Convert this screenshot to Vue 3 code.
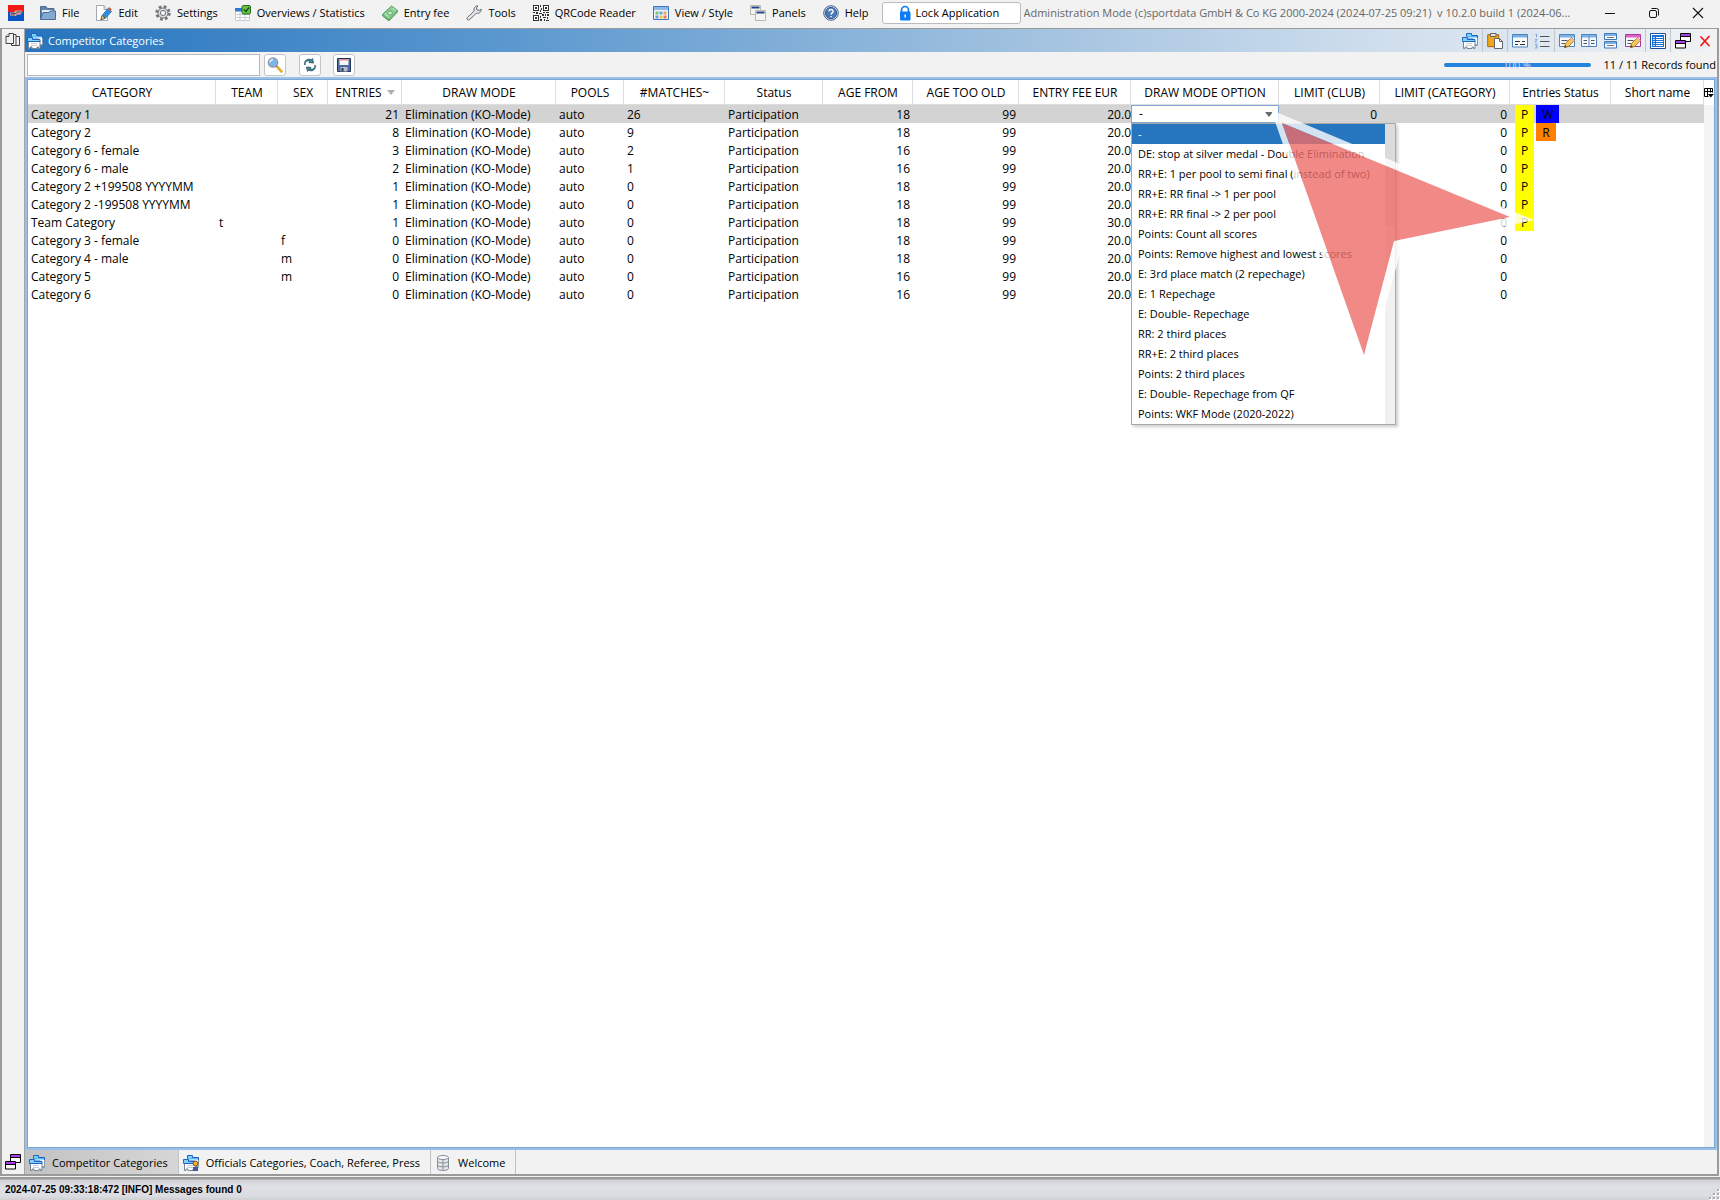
<script setup>
import { ref } from 'vue'

const folderStack = '<path d="M4.500 3.500v-3h5v2h6v9.500h-4v-6h-7z" fill="#fff" stroke="#1b62c4"/><path d="M5 1h4v2H5z" fill="#7fd0fa"/><path d="M5 3h10v1.500H5z" fill="#4fb8f5"/><path d="M15.500 5v7h-2.500" fill="none" stroke="#8b96a2"/><path d="M1.500 8v7.500h1.500v-1.500h2v1.500h5v-1.500h1.500v1.500h1.500V8z" fill="#fff" stroke="#7b8794"/><path d="M.500 7.500v-3h5v2h7.500v2H.500z" fill="#7fd0fa" stroke="#1b62c4"/><path d="M4 10.500h6M4 12.500h6" stroke="#c9ced4"/>'
const windows = '<path d="M5.500.500h10v8h-10z" fill="#fff" stroke="#000"/><path d="M6 1h9v2H6z" fill="#a93df0"/><path d="M5.500 3.500h10" stroke="#000"/><path d="M.500 7.500h10v7.500H.500z" fill="#fff" stroke="#000"/><path d="M1 8h9v2H1z" fill="#a93df0"/><path d="M.500 10.500h10" stroke="#000"/>'
const pencil = '<path d="M5.500 14.500l1-4 6-6 3 3-6 6z" fill="#f5c65a" stroke="#b07a2a"/><path d="M11 6l3 3 1.500-1.500-3-3z" fill="#f3b9a0"/><path d="M5.200 14.800l.8-2.800 2 2z" fill="#444"/>'

const icons = {
  logo: '<path fill="#f01818" d="M0 0h16v7H0z"/><path fill="#0a52c8" d="M0 7h16v9H0z"/><path d="M2 7.500h4l1-2h7l-1 4H9l-1 1.500H2.500z" fill="#d8a8a0"/><path d="M3 8.500h5l1-1.500h4M3 10h4" stroke="#555" fill="none"/>',
  file: '<path d="M.500 14.500v-13h5.500l1.500 2h6.500v4" fill="#5f83ad" stroke="#4c6f98"/><path d="M2 5h11v4H2z" fill="#e9eef5"/><path d="M.500 14.500L3 7.500h6l1-1.500h5.500v8.500z" fill="#84a9d3" stroke="#4c6f98"/>',
  edit: '<path d="M.500.500h7.500l3.500 4v11H.500z" fill="#fff" stroke="#a3a9b0"/><path d="M8 .5v4h3.500" fill="#dde" stroke="#a3a9b0"/><path d="M5 14.500l1.500-4.500 5.500-6.500 3.500 3-6 6.500z" fill="#2c8fe0" stroke="#1c5da5" stroke-width=".8"/><path d="M12 3.500l1.300-1.500 2.500 2.400L14.500 6z" fill="#e35a36"/><path d="M4.800 14.800l1.300-4.300 3.200 2.600z" fill="#f2c36b" stroke="#5a4420" stroke-width=".7"/>',
  settings: '<circle cx="8" cy="8" r="6.300" fill="none" stroke="#73777c" stroke-width="2.800" stroke-dasharray="2.700 2.240"/><circle cx="8" cy="8" r="5" fill="#d9dbde" stroke="#73777c"/><circle cx="8" cy="8" r="2.600" fill="#f2f2f2" stroke="#73777c"/>',
  overview: '<path d="M.500 3.500h14v12H.500z" fill="#fff" stroke="#c4ccd6"/><path d="M0 3h8v3.500H0z" fill="#2e7ad0"/><path d="M0 9.500h15M0 12.500h15M5 7v9M10 7v9" stroke="#c4ccd6"/><rect x="7" y=".5" width="8.500" height="8.500" rx="1.500" fill="#6fc043" stroke="#1f6d1f"/><path d="M9 4.500l2 2 3-4" fill="none" stroke="#124d12" stroke-width="1.400"/>',
  fee: '<path d="M.500 9.500L9.500 1l6 4.500-8.500 9.500z" fill="#8bcf92" stroke="#4f9a5b"/><path d="M.500 9.500v1.500l6.500 5v-1.500M7 16l8.500-9V5.500" fill="#6fb57a" stroke="#4f9a5b" stroke-width=".8"/><ellipse cx="8" cy="8" rx="2.300" ry="2" fill="#cdeecf" stroke="#4f9a5b" stroke-width=".8"/><path d="M10.500 3l3 2.300M3 8.500l3 2.800" stroke="#d6f2d8"/>',
  tools: '<path d="M1.200 12.700l7-6.700c-.8-2.700.7-5 3.600-5.200L10.500 3l.6 2 2 .5 2-1.500c.4 3-2 5-4.800 4.300l-7 6.500c-1.600.8-3-.6-2.100-2.100z" fill="#e3e5e9" stroke="#666b74"/>',
  qr: '<path d="M0 0h6v6H0zM10 0h6v6h-6zM0 10h6v6H0z" fill="#333"/><path d="M1 1h4v4H1zM11 1h4v4h-4zM1 11h4v4H1z" fill="#fff"/><path d="M2 2h2v2H2zM12 2h2v2h-2zM2 12h2v2H2zM7 0h1v2H7zM8 3h1v2H8zM7 5h1v2H7zM0 7h2v1H0zM3 7h2v2H3zM6 8h3v1H6zM10 7h2v1h-2zM13 7h3v1h-3zM9 9h2v2H9zM12 9h1v2h-1zM14 9h2v2h-2zM7 11h1v2H7zM10 12h3v1h-3zM14 12h1v2h-1zM7 14h2v2H7zM11 14h1v2h-1zM13 15h3v1h-3z" fill="#333"/>',
  view: '<path d="M.500 1.500h15v13H.500z" fill="#eef4fc" stroke="#3e76bd"/><path d="M1 2h14v3H1z" fill="#8fb7ea"/><path d="M2.500 6.500h3v3h-3z" fill="#7dc36b"/><path d="M6.500 6.500h3v3h-3z" fill="#6aa3e0"/><path d="M10.500 6.500h3v3h-3z" fill="#f0a64a"/><path d="M2.500 10.500h3v3h-3z" fill="#6aa3e0"/><path d="M6.500 10.500h3v3h-3z" fill="#f3c34e"/><path d="M10.500 10.500h3v3h-3z" fill="#ea7f45"/>',
  panels: '<path d="M.500.500h10v9H.500z" fill="#f4f4f0" stroke="#b9b9ae"/><path d="M1.500 1.500h8v2h-8z" fill="#27458f"/><path d="M5.500 5.500h10v10h-10z" fill="#f4f4f0" stroke="#b9b9ae"/><path d="M6.500 6.500h8v2h-8z" fill="#27458f"/>',
  help: '<circle cx="8" cy="8" r="7.300" fill="#dbe3ee" stroke="#405f90"/><circle cx="8" cy="8" r="5.600" fill="#4a79b8" stroke="#345a93"/><path d="M5.900 6.400c.2-2.600 4.300-2.400 4.200 0 0 1.500-2 1.600-2 3.200M8 11v1.200" fill="none" stroke="#fff" stroke-width="1.500"/>',
  lock: '<path d="M4.500 7V5a3.500 3.500 0 0 1 7 0v2" fill="none" stroke="#0f7af5" stroke-width="1.700"/><rect x="3" y="6.500" width="10.500" height="9" rx="1.200" fill="#0f7af5"/><path d="M8.200 9.500v3" stroke="#fff" stroke-width="1.400"/>',
  pages: '<g fill="#f2f2f2" stroke="#444"><path d="M9.500 4.500h5v9h-5z"/><path d="M6.500 2.500h4.500v11H6.500z"/><path d="M4 1.500h4.500v10H1V4.500z"/><path d="M4 1.500v3H1"/></g>',
  folderStack,
  windows,
  search: '<circle cx="6" cy="5.500" r="4.700" fill="#7fb4ea" stroke="#8d98a8" stroke-width="1.300"/><path d="M3 5.500a3 3 0 0 1 3-3" fill="none" stroke="#dff0ff" stroke-width="1.500"/><path d="M9.500 9l1.500 1.500" stroke="#555" stroke-width="1.500"/><path d="M10.800 10.500l3.700 4" stroke="#e8a92c" stroke-width="2.600" stroke-linecap="round"/>',
  refresh: '<g fill="#3d90a8" stroke="#174a5c" stroke-width=".8"><path d="M3 8C2.500 5 5 3 8 4L7 5.500 11.500 6 10.500 1.600 9.300 2.800C5.500.800 1.500 4 3 8z"/><path d="M13 8c.5 3-2 5-5 4l1-1.500-4.500-.5 1 4.400 1.200-1.200c3.800 2 7.800-1.200 6.300-5.200z"/></g>',
  save: '<path d="M1.500 1.500h13v13h-13z" fill="#4b6a9e" stroke="#26355c"/><path d="M3.500 2h9v6h-9z" fill="#f5f5f5"/><path d="M3.500 2h9v1.500h-9z" fill="#d88"/><path d="M4.500 10h7v4.500h-7z" fill="#b7bcc7"/><path d="M5.500 11h2v3.500h-2z" fill="#26355c"/>',
  paste: '<path d="M.700 1.700h11v12H.700z" fill="#f0a818" stroke="#a86a08"/><path d="M3.500.500h5.500v3H3.500z" fill="#e4e4e4" stroke="#666"/><path d="M7.500 5.500h5l3 3v7h-8z" fill="#fff" stroke="#666"/><path d="M12.500 5.500v3h3" fill="none" stroke="#666"/>',
  form: '<path d="M.500 1.500h15v12.500H.500z" fill="#f7fafd" stroke="#4f83be"/><path d="M1 2h14v2.500H1z" fill="#7fb0e4"/><path d="M3 8.500h5M10 8.500h3M3 11.500h3M8 11.500h5" stroke="#333"/>',
  list: '<path d="M6 3.500h9.500M6 8.500h9.500M6 13.500h9.500" stroke="#555"/><path d="M1.500 1.500l1-.5v3.500M1 6.500h2L1 9h2M1 11.500h2v3.500H1M1.500 13.200H3" fill="none" stroke="#6fa3d8" stroke-width=".9"/>',
  formEdit: '<path d="M.500 1.500h15v12H.500z" fill="#f7fafd" stroke="#4f83be"/><path d="M1 2h14v2.500H1z" fill="#7fb0e4"/><path d="M2.500 7.500h6M2.500 10.500h4" stroke="#555"/>' + pencil,
  columns: '<path d="M.500 1.500h15v12H.500z" fill="#f7fafd" stroke="#4f83be"/><path d="M1 2h14v2.500H1z" fill="#7fb0e4"/><path d="M8 3v11" stroke="#4f83be"/><path d="M2.500 7.500H6M2.500 10.500H6M10 7.500h3.500M10 10.500h3.500" stroke="#555"/>',
  stacked: '<path d="M1.500.500h12v6h-12zM1.500 8.500h12v6.500h-12z" fill="#f7fafd" stroke="#3f77b8"/><path d="M2 1h11v2H2zM2 9h11v2H2z" fill="#7fb0e4"/><path d="M4 4.500h7M4 12.500h7" stroke="#777"/>',
  pinkEdit: '<path d="M.500 1.500h15v12H.500z" fill="#f7fafd" stroke="#b0359a"/><path d="M1 2h14v2.500H1z" fill="#d868c4"/><path d="M2.500 7.500h6M2.500 10.500h4" stroke="#555"/>' + pencil,
  table: '<path d="M.500.500h15v15H.500z" fill="#fff" stroke="#1c4f9c"/><path d="M2 2h12v12H2z" fill="#1670d8"/><path d="M6 4.500h7M6 6.500h7M6 8.500h7M6 10.500h7M6 12.500h7" stroke="#fff"/><path d="M3 4.500h2M3 6.500h2M3 8.500h2M3 10.500h2M3 12.500h2" stroke="#cfe3ff"/>',
  close: '<path d="M4 4l8 8.500M12 3.500l-8 9" stroke="#f01c1c" stroke-width="1.800" stroke-linecap="round"/>',
  officials: folderStack + '<circle cx="12.500" cy="8.500" r="2.500" fill="#f3b32a" stroke="#5d3d08" stroke-width=".8"/><path d="M10 12h5v4h-5z" fill="#2e5fae"/><path d="M12 11.500h1.200v4H12z" fill="#e22"/>',
  database: '<path d="M2.500 2.500v11c0 2.600 11 2.600 11 0v-11" fill="#e3e7ea" stroke="#87909a"/><ellipse cx="8" cy="2.500" rx="5.500" ry="2" fill="#f6f8f9" stroke="#87909a"/><path d="M2.500 6.200c0 2.400 11 2.400 11 0M2.500 10c0 2.400 11 2.400 11 0M8 4.500v11" fill="none" stroke="#87909a"/>',
  minimize: '<path d="M3 8.500h10" stroke="#111"/>',
  restore: '<rect x="3.500" y="5.500" width="7" height="7" rx="1.500" fill="none" stroke="#111"/><path d="M5.500 3.500h5a2 2 0 0 1 2 2v5" fill="none" stroke="#111"/>',
  exit: '<path d="M3 3l10 10M13 3L3 13" stroke="#111" stroke-width="1.100"/>',
  columnControl: '<path d="M.500 1.500h8v4M.500 1.500v8h4M.500 4.500h8M3.500 1.500v8M6.500 1.500v4" fill="none" stroke="#000"/><path d="M3.800 7h6L6.800 10.500z" fill="#000"/>'
}

const menu = [
  { icon: 'file', label: 'File' },
  { icon: 'edit', label: 'Edit' },
  { icon: 'settings', label: 'Settings' },
  { icon: 'overview', label: 'Overviews / Statistics' },
  { icon: 'fee', label: 'Entry fee' },
  { icon: 'tools', label: 'Tools' },
  { icon: 'qr', label: 'QRCode Reader' },
  { icon: 'view', label: 'View / Style' },
  { icon: 'panels', label: 'Panels' },
  { icon: 'help', label: 'Help' }
]

const windowButtons = [
  { icon: 'minimize', label: 'Minimize' },
  { icon: 'restore', label: 'Restore' },
  { icon: 'exit', label: 'Close window' }
]

const panelTools = [
  [{ icon: 'folderStack', label: 'Categories' }],
  [{ icon: 'paste', label: 'Paste' }],
  [{ icon: 'form', label: 'Form' }, { icon: 'list', label: 'Numbered list' }],
  [
    { icon: 'formEdit', label: 'Edit form' },
    { icon: 'columns', label: 'Columns' },
    { icon: 'stacked', label: 'Stacked' },
    { icon: 'pinkEdit', label: 'Edit style' }
  ],
  [{ icon: 'table', label: 'Table' }],
  [{ icon: 'windows', label: 'Float panel' }, { icon: 'close', label: 'Close panel' }]
]

const columns = [
  { key: 'name', label: 'CATEGORY', width: 188 },
  { key: 'team', label: 'TEAM', width: 62 },
  { key: 'sex', label: 'SEX', width: 50 },
  { key: 'entries', label: 'ENTRIES', width: 74, num: true, sorted: true },
  { key: 'mode', label: 'DRAW MODE', width: 154 },
  { key: 'pools', label: 'POOLS', width: 68 },
  { key: 'matches', label: '#MATCHES~', width: 101 },
  { key: 'status', label: 'Status', width: 98 },
  { key: 'ageFrom', label: 'AGE FROM', width: 90, num: true },
  { key: 'ageTo', label: 'AGE TOO OLD', width: 106, num: true },
  { key: 'fee', label: 'ENTRY FEE EUR', width: 112, num: true, flush: true },
  { key: 'option', label: 'DRAW MODE OPTION', width: 148 },
  { key: 'club', label: 'LIMIT (CLUB)', width: 101, num: true },
  { key: 'limit', label: 'LIMIT (CATEGORY)', width: 130, num: true },
  { key: 'flags', label: 'Entries Status', width: 101 },
  { key: 'short', label: 'Short name', width: 93 }
]

const row = (name, team, sex, entries, matches, ageFrom, fee, flags) => ({
  name, team, sex, entries, matches, ageFrom, fee, flags,
  mode: 'Elimination (KO-Mode)', pools: 'auto', status: 'Participation', ageTo: 99, club: 0, limit: 0
})
const rows = [
  row('Category 1', '', '', 21, 26, 18, '20.0', ['P', 'W']),
  row('Category 2', '', '', 8, 9, 18, '20.0', ['P', 'R']),
  row('Category 6 - female', '', '', 3, 2, 16, '20.0', ['P']),
  row('Category 6 - male', '', '', 2, 1, 16, '20.0', ['P']),
  row('Category 2 +199508 YYYYMM', '', '', 1, 0, 18, '20.0', ['P']),
  row('Category 2 -199508 YYYYMM', '', '', 1, 0, 18, '20.0', ['P']),
  row('Team Category', 't', '', 1, 0, 18, '30.0', ['P']),
  row('Category 3 - female', '', 'f', 0, 0, 18, '20.0', []),
  row('Category 4 - male', '', 'm', 0, 0, 18, '20.0', []),
  row('Category 5', '', 'm', 0, 0, 16, '20.0', []),
  row('Category 6', '', '', 0, 0, 16, '20.0', [])
]

const options = [
  '-',
  'DE: stop at silver medal - Double Elimination',
  'RR+E: 1 per pool to semi final (instead of two)',
  'RR+E: RR final -> 1 per pool',
  'RR+E: RR final -> 2 per pool',
  'Points: Count all scores',
  'Points: Remove highest and lowest scores',
  'E: 3rd place match (2 repechage)',
  'E: 1 Repechage',
  'E: Double- Repechage',
  'RR: 2 third places',
  'RR+E: 2 third places',
  'Points: 2 third places',
  'E: Double- Repechage from QF',
  'Points: WKF Mode (2020-2022)'
]
const drawOption = ref('-')
const filter = ref('')

const tabs = [
  { icon: 'folderStack', label: 'Competitor Categories', active: true },
  { icon: 'officials', label: 'Officials Categories, Coach, Referee, Press' },
  { icon: 'database', label: 'Welcome' }
]
</script>

<template>
  <div class="app">
    <header class="menubar">
      <svg class="icon logo" viewBox="0 0 16 16" aria-hidden="true" v-html="icons.logo"></svg>
      <nav class="menu">
        <button v-for="m in menu" :key="m.label" type="button" class="menu-item">
          <svg class="icon" viewBox="0 0 16 16" aria-hidden="true" v-html="icons[m.icon]"></svg>
          <span>{{ m.label }}</span>
        </button>
      </nav>
      <button type="button" class="lock">
        <svg class="icon" viewBox="0 0 16 16" aria-hidden="true" v-html="icons.lock"></svg>
        <span>Lock Application</span>
      </button>
      <p class="app-title">Administration Mode (c)sportdata GmbH &amp; Co KG 2000-2024 (2024-07-25 09:21)&nbsp; v 10.2.0 build 1 (2024-06...</p>
      <div class="window-buttons">
        <button v-for="b in windowButtons" :key="b.label" type="button" :aria-label="b.label">
          <svg class="icon" viewBox="0 0 16 16" aria-hidden="true" v-html="icons[b.icon]"></svg>
        </button>
      </div>
    </header>

    <div class="workspace">
      <aside class="rail">
        <button type="button" aria-label="Pages"><svg class="icon" viewBox="0 0 16 16" aria-hidden="true" v-html="icons.pages"></svg></button>
        <button type="button" aria-label="Windows"><svg class="icon" viewBox="0 0 16 16" aria-hidden="true" v-html="icons.windows"></svg></button>
      </aside>

      <main class="panel">
        <div class="panel-title">
          <svg class="icon" viewBox="0 0 16 16" aria-hidden="true" v-html="icons.folderStack"></svg>
          <h1>Competitor Categories</h1>
          <div class="panel-tools">
            <div v-for="(group, i) in panelTools" :key="i" class="tool-group">
              <button v-for="t in group" :key="t.label" type="button" :aria-label="t.label">
                <svg class="icon" viewBox="0 0 16 16" aria-hidden="true" v-html="icons[t.icon]"></svg>
              </button>
            </div>
          </div>
        </div>

        <div class="toolbar">
          <input v-model="filter" class="filter" type="text" aria-label="Filter categories" />
          <button type="button" class="tool" aria-label="Search"><svg class="icon" viewBox="0 0 16 16" aria-hidden="true" v-html="icons.search"></svg></button>
          <button type="button" class="tool refresh" aria-label="Refresh"><svg class="icon" viewBox="0 0 16 16" aria-hidden="true" v-html="icons.refresh"></svg></button>
          <button type="button" class="tool" aria-label="Save"><svg class="icon" viewBox="0 0 16 16" aria-hidden="true" v-html="icons.save"></svg></button>
          <div class="progress" role="progressbar" aria-valuenow="100" aria-label="Loading"><span>100 %</span></div>
          <p class="records">11 / 11 Records found</p>
        </div>

        <div class="grid-frame">
          <div class="grid">
            <table>
              <colgroup><col v-for="c in columns" :key="c.key" :style="{ width: c.width + 'px' }" /></colgroup>
              <thead>
                <tr>
                  <th v-for="c in columns" :key="c.key" scope="col">{{ c.label }}<i v-if="c.sorted" class="sort"></i></th>
                </tr>
              </thead>
              <tbody>
                <tr v-for="(r, i) in rows" :key="r.name" :class="{ selected: i === 0 }">
                  <td v-for="c in columns" :key="c.key" :class="{ num: c.num, flush: c.flush, option: c.key === 'option', flags: c.key === 'flags' }">
                    <template v-if="c.key === 'flags'">
                      <div class="flag-list"><span v-for="f in r.flags" :key="f" class="flag" :class="'flag-' + f">{{ f }}</span></div>
                    </template>
                    <template v-else-if="c.key === 'option'">
                      <div v-if="i === 0" class="combo">
                        <select v-model="drawOption" aria-label="Draw mode option">
                          <option v-for="o in options" :key="o">{{ o }}</option>
                        </select>
                        <div class="popup">
                          <ul role="listbox" aria-label="Draw mode options">
                            <li v-for="o in options" :key="o" role="option" :aria-selected="o === drawOption" :class="{ active: o === drawOption }" @click="drawOption = o">{{ o }}</li>
                          </ul>
                          <div class="popup-scroll"><div class="popup-thumb"></div></div>
                        </div>
                        <svg class="pointer" viewBox="0 0 264 274" aria-hidden="true">
                          <path fill="#fff" fill-opacity=".8" fill-rule="evenodd" d="M0 2L263 112L130 142L94 272ZM11 15L93 247L123 133L239 109Z" />
                          <path fill="#ed6d69" fill-opacity=".8" d="M11 15L93 247L123 133L239 109Z" />
                        </svg>
                      </div>
                    </template>
                    <template v-else>{{ r[c.key] }}</template>
                  </td>
                </tr>
              </tbody>
            </table>
            <div class="grid-side">
              <button type="button" aria-label="Choose columns"><svg viewBox="0 0 10 12" aria-hidden="true" v-html="icons.columnControl"></svg></button>
              <div class="track"></div>
            </div>
          </div>
        </div>

        <div class="tabs" role="tablist">
          <button v-for="t in tabs" :key="t.label" type="button" role="tab" :aria-selected="!!t.active" class="tab" :class="{ active: t.active }">
            <svg class="icon" viewBox="0 0 16 16" aria-hidden="true" v-html="icons[t.icon]"></svg>
            <span>{{ t.label }}</span>
          </button>
        </div>
      </main>
    </div>

    <footer class="status">
      <p>2024-07-25 09:33:18:472 [INFO] Messages found 0</p>
      <svg class="grip" viewBox="0 0 12 12" aria-hidden="true">
        <path fill="#fff" d="M9 1h3v3H9zM5 5h3v3H5zM9 5h3v3H9zM1 9h3v3H1zM5 9h3v3H5zM9 9h3v3H9z" />
        <path fill="#a9a9ac" d="M9 1h2v2H9zM5 5h2v2H5zM9 5h2v2H9zM1 9h2v2H1zM5 9h2v2H5zM9 9h2v2H9z" />
      </svg>
    </footer>
  </div>
</template>

<style>
body {
  margin: 0;
}
</style>

<style scoped>
.app {
  display: flex;
  flex-direction: column;
  min-height: 100vh;
  background: #f2f2f2;
  color: #000;
  font: 11px/16px "Open Sans", "Noto Sans", sans-serif;
}
.app * {
  box-sizing: border-box;
}
button {
  display: flex;
  align-items: center;
  padding: 0;
  border: 0;
  background: none;
  color: inherit;
  font: inherit;
  white-space: nowrap;
}
p,
h1,
ul {
  margin: 0;
  padding: 0;
  font: inherit;
}
.icon {
  display: block;
  flex: none;
  width: 16px;
  height: 16px;
}

.menubar {
  display: flex;
  align-items: center;
  height: 28px;
  padding: 0 14px 2px 8px;
}
.menu {
  display: flex;
  gap: 17px;
  margin: 0 13px 0 16px;
}
.menu-item {
  gap: 6px;
}
.lock {
  gap: 3px;
  flex: none;
  width: 139px;
  height: 22px;
  padding-left: 14px;
  border: 1px solid #bcbcbc;
  border-radius: 3px;
  background: #fff;
}
.app-title {
  flex: 1;
  min-width: 0;
  margin-left: 3px;
  overflow: hidden;
  color: #666;
  white-space: nowrap;
}
.window-buttons {
  display: flex;
  gap: 28px;
}

.workspace {
  display: flex;
  flex: 1;
  margin-right: 1px;
  border: 2px solid #9a9a9a;
  border-top-width: 1px;
}
.rail {
  display: flex;
  flex-direction: column;
  justify-content: space-between;
  flex: none;
  width: 23px;
  padding: 3px 3px 4px;
  border-right: 1px solid #a6a6a6;
}
.panel {
  display: flex;
  flex: 1;
  flex-direction: column;
  min-width: 0;
}
.panel-title {
  display: flex;
  align-items: center;
  gap: 5px;
  height: 23px;
  padding-left: 2px;
  background: linear-gradient(90deg, #2675bf, #5896ce 27%, #a3c3e0 60%, #cfdeed 80%, #f0f2f4);
  color: #fff;
}
.panel-tools {
  display: flex;
  margin-left: auto;
}
.tool-group {
  display: flex;
  gap: 6px;
  height: 23px;
  padding: 0 4px;
}
.tool-group + .tool-group {
  border-left: 1px solid #c3c7cc;
}

.toolbar {
  display: flex;
  align-items: center;
  height: 25px;
  padding-left: 2px;
}
.filter {
  width: 233px;
  height: 22px;
  padding: 0 4px;
  border: 1px solid #b9b9b9;
  background: #fff;
  font: inherit;
}
.tool {
  justify-content: center;
  width: 22px;
  height: 22px;
  margin-left: 4px;
  border: 1px solid #c4c4c4;
  border-radius: 3px;
  background: #fff;
}
.tool.refresh {
  margin: 0 8px 0 13px;
}
.progress {
  width: 147px;
  height: 4px;
  margin-left: auto;
  border-radius: 2px;
  background: #2384df;
  color: #d5dcef;
  font-size: 10px;
  line-height: 4px;
  text-align: center;
}
.records {
  margin-left: 13px;
  padding-right: 1px;
}

.grid-frame {
  display: flex;
  flex: 1;
  border: 2px solid #98c1ea;
}
.grid {
  display: flex;
  align-items: flex-start;
  flex: 1;
  border: 1px solid #7fa6d2;
  background: #fff;
}
table {
  flex: 1;
  width: 100%;
  min-width: 0;
  border-collapse: separate;
  border-spacing: 0;
  table-layout: fixed;
  font-size: 12px;
}
th {
  height: 25px;
  padding: 2px 0 0 1px;
  border-right: 1px solid #dedede;
  border-bottom: 1px solid #dedede;
  font-weight: 400;
  text-align: center;
  white-space: nowrap;
}
.sort {
  display: inline-block;
  margin: 0 0 2px 5px;
  border: 4px solid transparent;
  border-top: 5px solid #b0b0b0;
  border-bottom: 0;
}
td {
  height: 18px;
  padding: 2px 3px 0;
  line-height: 16px;
  white-space: nowrap;
}
.num {
  text-align: right;
}
.flush {
  padding-right: 0;
}
.option {
  padding: 0;
}
.flags {
  padding: 0 5px;
}
.selected td {
  background: #d3d3d3;
}
.flag-list {
  display: flex;
  gap: 2px;
  height: 18px;
}
.flag {
  padding: 2px 6px 0;
}
.flag-P {
  background: #ff0;
}
.flag-W {
  background: #00f;
}
.flag-R {
  background: #ff8000;
}

.combo {
  position: relative;
  height: 18px;
}
select {
  display: block;
  width: 100%;
  height: 18px;
  padding: 0 20px 0 7px;
  border: 1px solid #7fa6d2;
  border-radius: 0;
  appearance: none;
  background: #fff;
  color: #000;
  font: inherit;
  line-height: 16px;
}
.combo::after {
  position: absolute;
  top: 7px;
  right: 6px;
  border: 4px solid transparent;
  border-top: 5px solid #666b72;
  border-bottom: 0;
  content: "";
}
.popup {
  position: absolute;
  z-index: 1;
  top: 18px;
  left: 0;
  display: flex;
  width: 265px;
  border: 1px solid #a9a9a9;
  background: #fff;
  box-shadow: 2px 2px 3px #0003;
  font-size: 11px;
}
.popup ul {
  flex: 1;
  list-style: none;
}
.popup li {
  height: 20px;
  padding-left: 6px;
  line-height: 20px;
}
.popup li.active {
  background: #2675bf;
  color: #fff;
}
.popup-scroll {
  width: 10px;
  background: #f1f1f1;
}
.popup-thumb {
  height: 102px;
  background: #dbdbdb;
}
.pointer {
  position: absolute;
  z-index: 2;
  top: 3px;
  left: 140px;
  width: 264px;
  height: 274px;
  pointer-events: none;
}

.grid-side {
  display: flex;
  flex-direction: column;
  align-self: stretch;
  width: 10px;
}
.grid-side button {
  height: 25px;
}
.grid-side svg {
  width: 10px;
  height: 12px;
}
.track {
  flex: 1;
  background: #f3f3f3;
}

.tabs {
  display: flex;
  height: 24px;
}
.tab {
  gap: 7px;
  padding: 1px 10px 0 4px;
  border-right: 1px solid #c2c2c2;
}
.tab.active {
  background: linear-gradient(90deg, #c2c2c2, #d6d6d6);
}

.status {
  display: flex;
  align-items: center;
  justify-content: space-between;
  height: 24px;
  padding: 2px 0 0 5px;
  border-top: 1px solid #f2f2f2;
  background: linear-gradient(#999 0 2px, #cfd0d5 3px, #dfe0e5 9px, #dcdde2 19px, #cfd0d4);
  font: bold 10px/14px "Liberation Sans", sans-serif;
}
.grip {
  align-self: flex-end;
  width: 12px;
  height: 12px;
}
</style>
